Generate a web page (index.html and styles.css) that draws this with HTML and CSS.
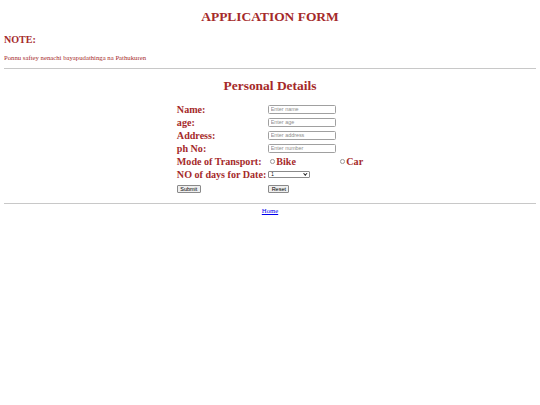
FILE: index.html
```html
<!DOCTYPE html>
<html>
<head>
<meta charset="utf-8">
<title>Application Form</title>
<link rel="stylesheet" href="styles.css">
</head>
<body>
<h1 class="title">APPLICATION FORM</h1>
<h2 class="note">NOTE:</h2>
<p class="note-text">Ponnu saftey nenachi bayapudathinga na Pathukuren</p>
<hr class="rule">
<h1 class="title">Personal Details</h1>
<form class="form">
  <label class="lbl" for="name">Name:</label>
  <div class="cell"><input class="field" id="name" type="text" placeholder="Enter name"></div>
  <div class="cell"></div>

  <label class="lbl" for="age">age:</label>
  <div class="cell"><input class="field" id="age" type="text" placeholder="Enter age"></div>
  <div class="cell"></div>

  <label class="lbl" for="addr">Address:</label>
  <div class="cell"><input class="field" id="addr" type="text" placeholder="Enter address"></div>
  <div class="cell"></div>

  <label class="lbl" for="ph">ph No:</label>
  <div class="cell"><input class="field" id="ph" type="text" placeholder="Enter number"></div>
  <div class="cell"></div>

  <span class="lbl">Mode of Transport:</span>
  <label class="cell opt"><input class="radio" type="radio" name="mode">Bike</label>
  <label class="cell opt"><input class="radio" type="radio" name="mode">Car</label>

  <label class="lbl" for="days">NO of days for Date:</label>
  <div class="cell"><span class="pick-wrap"><select class="pick" id="days"><option>1</option><option>2</option><option>3</option></select></span></div>
  <div class="cell"></div>

  <div class="cell btn-cell"><button class="btn" type="submit">Submit</button></div>
  <div class="cell btn-cell"><button class="btn" type="reset">Reset</button></div>
  <div class="cell btn-cell"></div>
</form>
<hr class="rule rule-bottom">
<p class="home"><a href="#">Home</a></p>
</body>
</html>
```

FILE: styles.css
```css
html, body {
  background: #ffffff;
}
body {
  margin: 0 4px;
  padding-top: 0.1px;
  font-family: "Liberation Serif", "Times New Roman", serif;
  color: #a52a2a;
}
.title {
  font-size: 13.44px;
  font-weight: bold;
  text-align: center;
  margin: 9px 0;
  line-height: 15.5px;
}
.note {
  font-size: 10.08px;
  font-weight: bold;
  margin: 9px 0 8.4px;
  line-height: 11.6px;
}
.note-text {
  font-size: 6.72px;
  line-height: 7.7px;
  margin: 6.7px 0;
}
.rule {
  border: none;
  border-top: 1px solid #c8c8c8;
  margin: 6.7px 0;
  height: 0;
}
.form {
  display: grid;
  grid-template-columns: auto auto auto;
  justify-content: center;
  column-gap: 2px;
  row-gap: 1.4px;
  margin-top: 10px;
}
.lbl, .cell {
  display: flex;
  align-items: center;
  height: 11.6px;
}
.lbl {
  font-size: 10.08px;
  font-weight: bold;
  white-space: nowrap;
}
.opt {
  font-size: 10.08px;
  font-weight: bold;
  gap: 1px;
  padding-left: 2px;
}
.field {
  box-sizing: border-box;
  width: 68px;
  height: 9px;
  padding: 0 1.5px;
  border: 0.7px solid #a0a0a0;
  border-radius: 1.5px;
  font-family: "Liberation Sans", Arial, sans-serif;
  font-size: 5.4px;
  color: #000;
  background: #fff;
  outline: none;
}
.field::placeholder {
  color: #8e8e8e;
}
.radio {
  appearance: none;
  -webkit-appearance: none;
  box-sizing: border-box;
  width: 4.6px;
  height: 4.6px;
  margin: 0 0.5px 0 0;
  border: 0.6px solid #9a9a9a;
  border-radius: 50%;
  background: #fff;
}
.pick-wrap {
  position: relative;
  display: inline-block;
  height: 7px;
}
.pick-wrap::after {
  content: "";
  position: absolute;
  right: 3.2px;
  top: 1.4px;
  width: 1.6px;
  height: 1.6px;
  border-right: 0.8px solid #222;
  border-bottom: 0.8px solid #222;
  transform: rotate(45deg);
  pointer-events: none;
}
.pick {
  appearance: none;
  -webkit-appearance: none;
  box-sizing: border-box;
  display: block;
  width: 42px;
  height: 7px;
  padding: 0 0 0 2px;
  border: 0.6px solid #8a8a8a;
  border-radius: 1px;
  font-family: "Liberation Sans", Arial, sans-serif;
  font-size: 4.6px;
  color: #000;
  background: #fff;
  outline: none;
}
.btn-cell {
  height: 9px;
  margin-top: 3.5px;
}
.btn {
  box-sizing: border-box;
  height: 8px;
  padding: 0 2.4px;
  border: 0.6px solid #8a8a8a;
  border-radius: 1px;
  background: #efefef;
  font-family: "Liberation Sans", Arial, sans-serif;
  font-size: 5.5px;
  line-height: 6px;
  color: #000;
}
.rule-bottom {
  margin-top: 9px;
  margin-bottom: 3px;
}
.home {
  text-align: center;
  font-size: 6.72px;
  line-height: 7.7px;
  margin: 3px 0;
}
.home a {
  color: #0000ee;
}
```
